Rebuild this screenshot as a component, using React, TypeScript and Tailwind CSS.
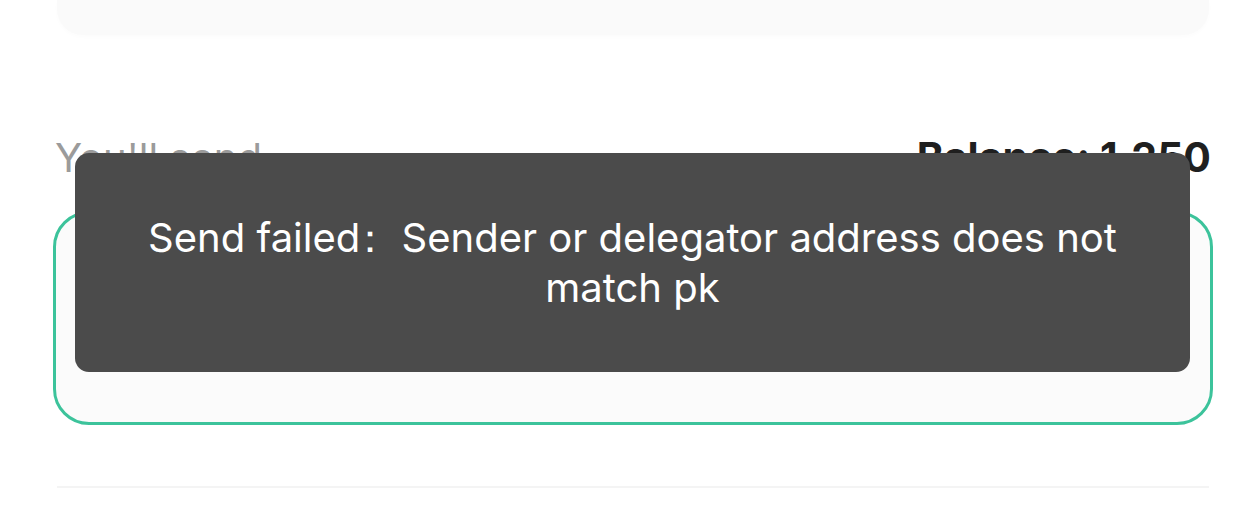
import React from "react";

export default function App() {
  return (
    <div
      className="relative w-[1236px] h-[512px] overflow-hidden bg-white"
      style={{ fontFamily: "Inter, 'Noto Sans', sans-serif" }}
    >
      <div className="flex flex-col pl-[53px] pr-[23px]">
        <div className="mx-[4px] h-[35px] rounded-b-[26px] bg-[#fafafa] shadow-[0_2px_4px_rgba(0,0,0,0.015)]" />
        <div className="mt-[98px] flex items-baseline justify-between px-[2px]">
          <span className="text-[40px] leading-[48px] text-[#9b9b9b]">You'll send</span>
          <span className="text-[41px] leading-[48px] font-bold text-[#1f1f1f]">Balance: 1.250</span>
        </div>
        <div className="mt-[29px] h-[214px] rounded-[36px] border-[3px] border-[#3cc39b] bg-[#fbfbfb]" />
        <div className="mx-[4px] mt-[61px] h-[2px] bg-[#f4f4f4]" />
      </div>

      <div className="absolute left-[75px] top-[153px] w-[1115px] h-[219px] rounded-[14px] bg-[#4b4b4b] flex items-center justify-center px-[50px]">
        <p className="text-center text-white text-[40px] leading-[50px]">
          Send failed<span className="ml-[-10px]">：</span>&nbsp;Sender or delegator address does not match pk
        </p>
      </div>
    </div>
  );
}
